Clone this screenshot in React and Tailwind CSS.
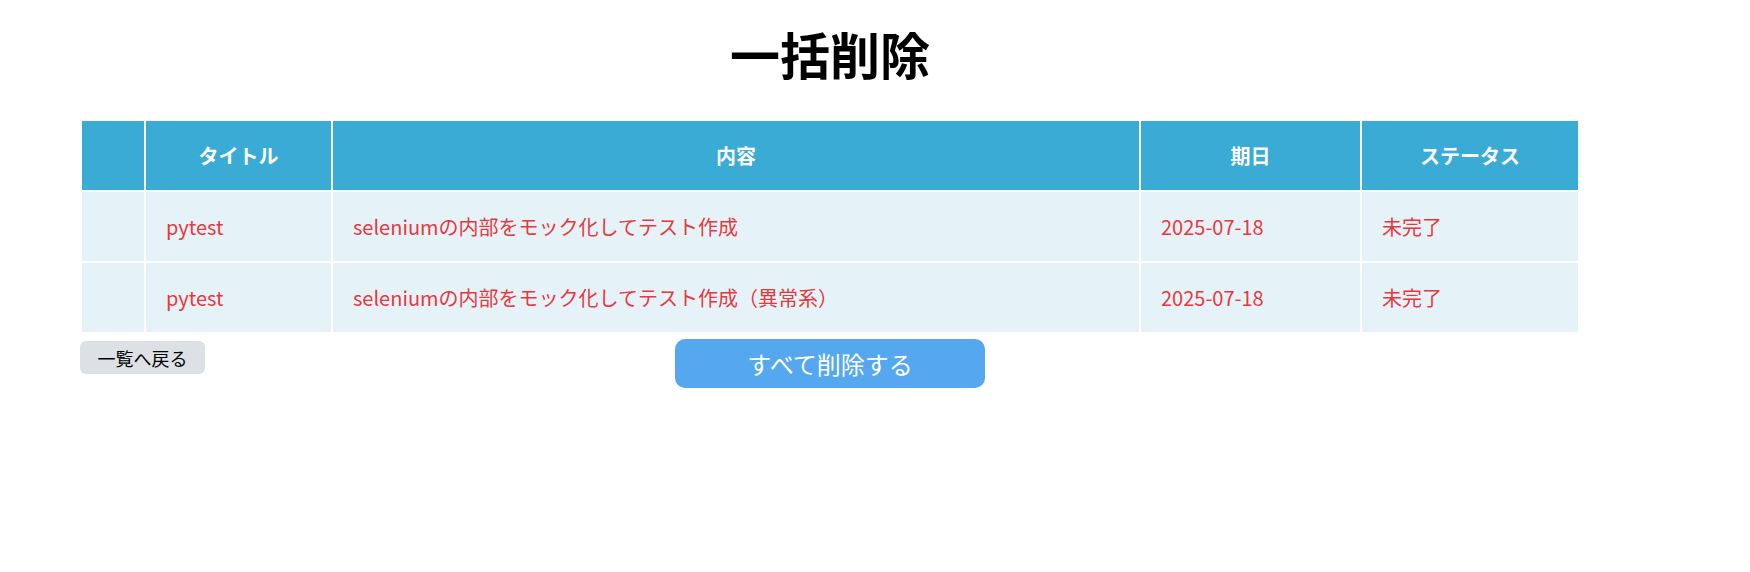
const COLUMNS = [
  { key: "check", label: "", width: "w-[62px]" },
  { key: "title", label: "タイトル", width: "w-[185px]" },
  { key: "content", label: "内容", width: "w-[806px]" },
  { key: "due", label: "期日", width: "w-[219px]" },
  { key: "status", label: "ステータス", width: "w-[216px]" },
];

const TASKS = [
  {
    id: 1,
    title: "pytest",
    content: "seleniumの内部をモック化してテスト作成",
    due: "2025-07-18",
    status: "未完了",
  },
  {
    id: 2,
    title: "pytest",
    content: "seleniumの内部をモック化してテスト作成（異常系）",
    due: "2025-07-18",
    status: "未完了",
  },
];

export default function App() {
  return (
    <div className="min-h-[572px] bg-white font-['Noto_Sans_CJK_JP','Noto_Sans',sans-serif]">
      <div className="ml-[80px] w-[1500px]">
        <h1 className="pt-[28px] text-center text-[50px] font-bold leading-[50px] text-black">
          一括削除
        </h1>

        <table className="mt-[41px] w-full table-fixed border-separate border-spacing-[2px]">
          <thead>
            <tr>
              {COLUMNS.map((col) => (
                <th
                  key={col.key}
                  className={`${col.width} h-[69px] bg-[#39abd4] p-0 text-center align-middle text-[20px] font-bold text-white`}
                >
                  {col.label}
                </th>
              ))}
            </tr>
          </thead>
          <tbody>
            {TASKS.map((task) => (
              <tr key={task.id}>
                <td className="h-[69px] bg-[#e5f3f8] p-0" />
                <td className="h-[69px] bg-[#e5f3f8] px-5 py-0 align-middle text-[20px] text-[#e8383d]">
                  {task.title}
                </td>
                <td className="h-[69px] bg-[#e5f3f8] px-5 py-0 align-middle text-[20px] text-[#e8383d]">
                  {task.content}
                </td>
                <td className="h-[69px] bg-[#e5f3f8] px-5 py-0 align-middle text-[20px] text-[#e8383d]">
                  {task.due}
                </td>
                <td className="h-[69px] bg-[#e5f3f8] px-5 py-0 align-middle text-[20px] text-[#e8383d]">
                  {task.status}
                </td>
              </tr>
            ))}
          </tbody>
        </table>

        <div className="mt-[5px] grid grid-cols-[1fr_auto_1fr] items-start">
          <button
            type="button"
            className="mt-[2px] h-[33px] w-[125px] justify-self-start rounded-md bg-[#dde1e6] text-[18px] leading-none text-black"
          >
            一覧へ戻る
          </button>
          <button
            type="button"
            className="h-[49px] w-[310px] rounded-[10px] bg-[#55a7ef] text-[24px] leading-none text-white"
          >
            すべて削除する
          </button>
          <div />
        </div>
      </div>
    </div>
  );
}
